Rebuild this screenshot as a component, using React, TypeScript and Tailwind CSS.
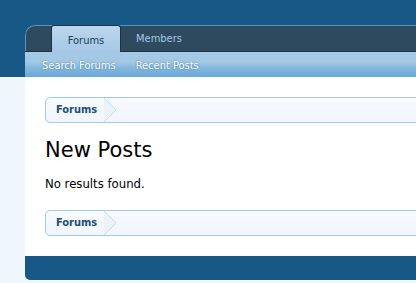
export default function App() {
  return (
    <div
      className="w-[416px] h-[283px] overflow-hidden bg-[linear-gradient(#185886_0_77px,#f0f7fc_77px)] pt-[25px] pl-[25px] text-[11px] text-[#000]"
      style={{ fontFamily: '"DejaVu Sans", Verdana, sans-serif' }}
    >
      <div className="w-[700px]">
        {/* nav tabs */}
        <div className="h-[26px] bg-[#2d4a5e] rounded-tl-[10px] border-t border-l border-[#5f8fbb] flex items-end pl-[25px] font-stretch-condensed">
          <div className="h-[27px] w-[70px] -mb-px rounded-t-[3px] border border-b-0 border-[#1d3444] bg-[linear-gradient(#bcd6ec,#a5c8e5)] flex items-center justify-center pt-[4px] text-[#183e59]">
            Forums
          </div>
          <div className="h-[26px] flex items-center pt-[2px] pl-[15px] text-[#a5c8e5]">Members</div>
        </div>
        {/* sub nav */}
        <div className="h-[26px] bg-[linear-gradient(#a5c9e5_0,#a3c8e4_40%,#7fb4dc_70%,#6ba8d6_100%)] border-t border-[#1d3444] flex items-center gap-[20px] pt-[3px] pl-[17px] text-white font-stretch-condensed [text-shadow:0_0_2px_#3d6d94]">
          <span>Search Forums</span>
          <span>Recent Posts</span>
        </div>
        {/* content */}
        <div className="bg-white pt-[20px] pl-[20px] pb-[20px]">
          <Breadcrumb />
          <h1 className="mt-[14px] text-[21px] leading-[26px] text-[#000]">New Posts</h1>
          <p className="mt-[13px] text-[13px] leading-[16px] font-stretch-condensed">No results found.</p>
          <div className="mt-[18px]">
            <Breadcrumb />
          </div>
        </div>
        {/* footer */}
        <div className="h-[24px] bg-[#185886] rounded-bl-[5px]" />
      </div>
    </div>
  )
}

function Breadcrumb() {
  return (
    <div className="h-[26px] rounded-l-[5px] border border-[#a5cae4] bg-[linear-gradient(#f7fafd,#f0f6fc)] flex items-stretch">
      <div className="relative flex items-center pl-[10px] pr-[8px] pt-px font-bold font-stretch-condensed text-[#1e4e7a]">
        Forums
        <svg className="absolute right-[-12px] top-0" width="13" height="24" viewBox="0 0 13 24">
          <path d="M0 0 L12 12 L0 24" fill="#eaf2fa" stroke="#c4dcef" strokeWidth="1" />
        </svg>
      </div>
    </div>
  )
}
